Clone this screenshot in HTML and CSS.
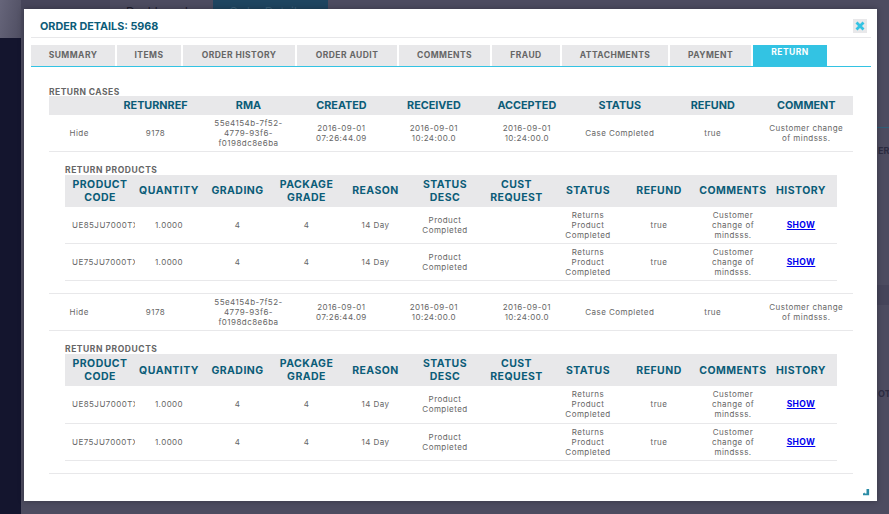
FILE: index.html
```html
<!DOCTYPE html>
<html lang="en">
<head>
  <meta charset="UTF-8">
  <title>Order Details</title>
  <link rel="stylesheet" href="styles.css">
</head>
<body>
  <div class="backdrop">
    <div class="side"></div>
    <div class="top-nav">
      <span class="nav-a"></span>
      <span class="nav-b">Dashboard</span>
      <span class="nav-c">Order Details</span>
    </div>
    <span class="peek-line"></span>
    <span class="peek-band"></span>
    <span class="peek peek-er">ER</span>
    <span class="peek peek-ota">OTA</span>
  </div>

  <div class="modal">
    <div class="modal-head">
      <h1>ORDER DETAILS: 5968</h1>
      <button class="close">
        <svg width="10" height="10" viewBox="0 0 10 10"><path d="M1.5 1.5 8.5 8.5M8.5 1.5 1.5 8.5" stroke="#33c3e3" stroke-width="2.8"/></svg>
      </button>
    </div>

    <div class="tabs">
      <a class="tab w-summary">SUMMARY</a>
      <a class="tab w-items">ITEMS</a>
      <a class="tab w-history">ORDER HISTORY</a>
      <a class="tab w-audit">ORDER AUDIT</a>
      <a class="tab w-comments">COMMENTS</a>
      <a class="tab w-fraud">FRAUD</a>
      <a class="tab w-attach">ATTACHMENTS</a>
      <a class="tab w-payment">PAYMENT</a>
      <a class="tab w-return active">RETURN</a>
    </div>

    <div class="section-title">RETURN CASES</div>
    <table class="cases">
      <colgroup>
        <col class="c0"><col class="c1"><col class="c2"><col class="c1"><col class="c1"><col class="c2"><col class="c1"><col class="c2"><col class="c2">
      </colgroup>
      <thead>
        <tr><th></th><th>RETURNREF</th><th>RMA</th><th>CREATED</th><th>RECEIVED</th><th>ACCEPTED</th><th>STATUS</th><th>REFUND</th><th>COMMENT</th></tr>
      </thead>
      <tbody>
        <tr class="case">
          <td>Hide</td><td>9178</td><td>55e4154b-7f52-4779-93f6-f0198dc8e6ba</td><td>2016-09-01 07:26:44.09</td><td>2016-09-01 10:24:00.0</td><td>2016-09-01 10:24:00.0</td><td>Case Completed</td><td>true</td><td>Customer change of mindsss.</td>
        </tr>
        <tr>
          <td colspan="9" class="nested">
            <div class="section-title sub">RETURN PRODUCTS</div>
            <table class="products">
              <colgroup>
                <col class="p0"><col class="p1"><col class="p2"><col class="p2"><col class="p2"><col class="p3"><col class="p4"><col class="p3"><col class="p5"><col class="p6"><col class="p7">
              </colgroup>
              <thead>
                <tr><th>PRODUCT CODE</th><th>QUANTITY</th><th>GRADING</th><th>PACKAGE GRADE</th><th>REASON</th><th>STATUS DESC</th><th>CUST REQUEST</th><th>STATUS</th><th>REFUND</th><th>COMMENTS</th><th>HISTORY</th></tr>
              </thead>
              <tbody>
                <tr><td class="code"><div>UE85JU7000TXXU</div></td><td>1.0000</td><td>4</td><td>4</td><td>14 Day</td><td>Product Completed</td><td></td><td>Returns Product Completed</td><td>true</td><td>Customer change of mindsss.</td><td><a class="show" href="#">SHOW</a></td></tr>
                <tr><td class="code"><div>UE75JU7000TXXU</div></td><td>1.0000</td><td>4</td><td>4</td><td>14 Day</td><td>Product Completed</td><td></td><td>Returns Product Completed</td><td>true</td><td>Customer change of mindsss.</td><td><a class="show" href="#">SHOW</a></td></tr>
              </tbody>
            </table>
          </td>
        </tr>
        <tr class="case">
          <td>Hide</td><td>9178</td><td>55e4154b-7f52-4779-93f6-f0198dc8e6ba</td><td>2016-09-01 07:26:44.09</td><td>2016-09-01 10:24:00.0</td><td>2016-09-01 10:24:00.0</td><td>Case Completed</td><td>true</td><td>Customer change of mindsss.</td>
        </tr>
        <tr>
          <td colspan="9" class="nested">
            <div class="section-title sub">RETURN PRODUCTS</div>
            <table class="products">
              <colgroup>
                <col class="p0"><col class="p1"><col class="p2"><col class="p2"><col class="p2"><col class="p3"><col class="p4"><col class="p3"><col class="p5"><col class="p6"><col class="p7">
              </colgroup>
              <thead>
                <tr><th>PRODUCT CODE</th><th>QUANTITY</th><th>GRADING</th><th>PACKAGE GRADE</th><th>REASON</th><th>STATUS DESC</th><th>CUST REQUEST</th><th>STATUS</th><th>REFUND</th><th>COMMENTS</th><th>HISTORY</th></tr>
              </thead>
              <tbody>
                <tr><td class="code"><div>UE85JU7000TXXU</div></td><td>1.0000</td><td>4</td><td>4</td><td>14 Day</td><td>Product Completed</td><td></td><td>Returns Product Completed</td><td>true</td><td>Customer change of mindsss.</td><td><a class="show" href="#">SHOW</a></td></tr>
                <tr><td class="code"><div>UE75JU7000TXXU</div></td><td>1.0000</td><td>4</td><td>4</td><td>14 Day</td><td>Product Completed</td><td></td><td>Returns Product Completed</td><td>true</td><td>Customer change of mindsss.</td><td><a class="show" href="#">SHOW</a></td></tr>
              </tbody>
            </table>
          </td>
        </tr>
      </tbody>
    </table>

    <svg class="resize" width="7" height="7" viewBox="0 0 8 8"><path d="M4 0h3v7H0V5l2-1v1h2z" fill="#2a8ca6"/></svg>
  </div>
</body>
</html>
```

FILE: styles.css
```css
* {
  box-sizing: border-box;
}
html, body {
  margin: 0;
  height: 100%;
  overflow: hidden;
}
body {
  font-family: Inter, "Liberation Sans", sans-serif;
  background: #4d4c60;
  color: #666;
}

/* page behind the dialog */
.backdrop {
  height: 514px;
  display: flex;
}
.side {
  width: 21px;
  background: linear-gradient(100deg, #66657a 0, #4f4e62 100%) 0 0 / 21px 38px no-repeat, #14152e;
}
.top-nav {
  display: flex;
  height: 9px;
  overflow: hidden;
  font-size: 12px;
  line-height: 12px;
}
.top-nav span {
  padding: 6px 0 0 16px;
}
.nav-a {
  width: 89px;
  background: #46455a;
}
.nav-b {
  width: 103px;
  color: #1d1d2e;
}
.nav-c {
  width: 115px;
  background: #1f4560;
  color: #3a5f78;
}
.peek {
  position: absolute;
  left: 878px;
  font-size: 9px;
  font-weight: 700;
  color: #2b2b40;
}
.peek-er {
  top: 145px;
}
.peek-ota {
  top: 388px;
}
.peek-line {
  position: absolute;
  left: 877px;
  top: 127px;
  width: 12px;
  height: 1px;
  background: #2f5f78;
}
.peek-band {
  position: absolute;
  left: 877px;
  top: 285px;
  width: 12px;
  height: 20px;
  background: #46455a;
}

.modal {
  position: absolute;
  left: 24px;
  top: 9px;
  width: 853px;
  height: 492px;
  background: #fff;
  padding: 0 6px 0 7px;
  box-shadow: 0 0 6px rgba(0,0,0,0.3);
}
.modal-head {
  height: 29px;
  border-bottom: 1px solid #e8e8ea;
  display: flex;
  align-items: center;
  justify-content: space-between;
  padding: 5px 4px 0 9px;
}
h1 {
  margin: 2px 0 0;
  font-size: 10.8px;
  font-weight: 700;
  color: #0b5c78;
}
.close {
  width: 14px;
  height: 14px;
  padding: 0;
  border: 0;
  background: #e8e8ea;
  display: flex;
  align-items: center;
  justify-content: center;
}

.tabs {
  display: flex;
  gap: 2px;
  margin-top: 7px;
  height: 22px;
  border-bottom: 1px solid #33c3e3;
}
.tab {
  height: 21px;
  background: #e8e8ea;
  font-size: 8.5px;
  font-weight: 700;
  letter-spacing: 0.45px;
  color: #666;
  text-align: center;
  line-height: 21px;
}
.tab.active {
  background: #33c3e3;
  color: #fff;
  line-height: 15px;
}
.w-summary { width: 84px; }
.w-items { width: 64px; }
.w-history { width: 112px; }
.w-audit { width: 100px; }
.w-comments { width: 91px; }
.w-fraud { width: 68px; }
.w-attach { width: 106px; }
.w-payment { width: 81px; }
.w-return { width: 74px; }

.section-title {
  margin: 18px 0 0 18px;
  height: 11px;
  font-size: 8.5px;
  font-weight: 700;
  letter-spacing: 0.45px;
  line-height: 14px;
  color: #666;
  text-align: left;
}
.section-title.sub {
  margin: 7px 0 0 0;
  line-height: 13px;
  letter-spacing: 0.55px;
}

table {
  border-collapse: collapse;
  table-layout: fixed;
}
.cases {
  width: 804px;
  margin-left: 18px;
}
.products {
  width: 772px;
}
th {
  background: #e8e8ea;
  color: #0b5c78;
  font-size: 10.5px;
  font-weight: 700;
  line-height: 13px;
  padding: 0;
  text-align: center;
}
.cases > thead th {
  height: 19px;
  font-size: 10.8px;
}
.products th {
  height: 32px;
}
td {
  font-size: 8px;
  letter-spacing: 0.45px;
  line-height: 10px;
  padding: 0 8px;
  text-align: center;
  color: #666;
}
.products th:last-child,
.products td:last-child {
  padding: 0 6px 0 0;
}
.case td {
  height: 37px;
  border-bottom: 1px solid #e8e8ea;
}
.cases > tbody > tr.case:first-child td {
  height: 36px;
}
.nested {
  padding: 5px 16px 12px;
  border-bottom: 1px solid #e8e8ea;
}
.products td {
  height: 37px;
  border-bottom: 1px solid #e8e8ea;
}
.products td.code {
  padding: 0 0 0 7px;
  text-align: left;
}
.code div {
  overflow: hidden;
  white-space: nowrap;
}
.show {
  font-size: 8.5px;
  font-weight: 700;
  letter-spacing: 0.4px;
  color: #0000ee;
}

.resize {
  position: absolute;
  right: 7px;
  bottom: 5px;
}

.c0 { width: 60px; }
.c1 { width: 92px; }
.c2 { width: 93px; }
.p0 { width: 70px; }
.p1 { width: 68px; }
.p2 { width: 69px; }
.p3 { width: 70px; }
.p4 { width: 73px; }
.p5 { width: 72px; }
.p6 { width: 76px; }
.p7 { width: 66px; }
```
